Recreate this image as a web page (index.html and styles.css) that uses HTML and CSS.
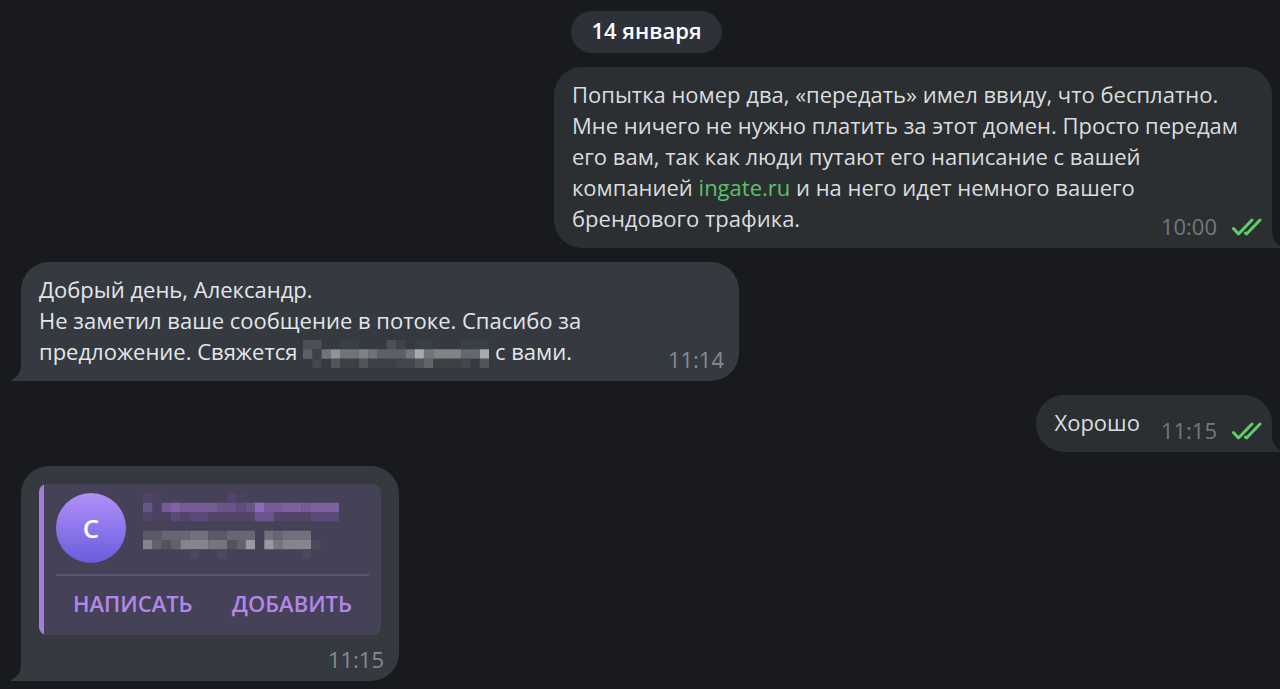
FILE: index.html
```html
<!DOCTYPE html>
<html lang="ru">
<head>
    <meta charset="UTF-8">
    <meta name="viewport" content="width=device-width, initial-scale=1.0">
    <title>Чат</title>
    <link rel="stylesheet" href="styles.css">
</head>
<body>
    <main class="chat">
        <div class="date">14 января</div>

        <div class="bubble out">
            <p class="text">Попытка номер два, «передать» имел ввиду, что бесплатно. Мне ничего не нужно платить за этот домен. Просто передам его вам, так как люди путают его написание с вашей компанией <a href="#">ingate.ru</a> и на него идет немного вашего брендового трафика.</p>
            <div class="meta">
                <time>10:00</time>
                <svg class="ticks" viewBox="0 0 30 18" aria-hidden="true"><path d="M1.5 10.5l5 5.5L20 2M13.5 15l1 1L28 2"/></svg>
            </div>
            <svg class="tail" viewBox="0 0 10 18" aria-hidden="true"><path d="M0 0C0 9 3 14 10 17V18H0z"/></svg>
        </div>

        <div class="bubble in">
            <p class="text">Добрый день, Александр.<br>Не заметил ваше сообщение в потоке. Спасибо за предложение. Свяжется <svg class="mosaic-inline" viewBox="0 0 20 3" aria-hidden="true">
                <path fill="#4c5157" d="M0 0h2v1H0zM9 0h1v1H9z"/>
                <path fill="#3d434a" d="M10 0h1v1h-1zM1 1h1v1H1z"/>
                <path fill="#393f46" d="M4 0h2v1H4zM12 0h2v1h-2zM17 0h3v1h-3z"/>
                <path fill="#5d6166" d="M0 1h1v1H0zM8 1h2v1H8zM10 1h1v1h-1z"/>
                <path fill="#707377" d="M2 1h1v1H2zM4 1h2v1H4zM7 1h1v1H7zM13 1h1v1h-1z"/>
                <path fill="#929496" d="M3 1h1v1H3z"/>
                <path fill="#808386" d="M6 1h1v1H6zM14 1h3v1h-3z"/>
                <path fill="#74777e" d="M11 1h1v1h-1z"/>
                <path fill="#a9aaac" d="M12 1h1v1h-1zM19 1h1v1h-1z"/>
                <path fill="#65696e" d="M17 1h2v1h-2z"/>
                <path fill="#42474d" d="M1 2h1v1H1zM10 2h2v1h-2zM17 2h1v1h-1z"/>
                <path fill="#50555a" d="M3 2h1v1H3zM6 2h1v1H6zM12 2h1v1h-1zM19 2h1v1h-1z"/>
                <path fill="#62666b" d="M13 2h1v1h-1z"/>
                <path fill="#3b4147" d="M4 2h2v1H4zM7 2h3v1H7zM14 2h3v1h-3z"/>
            </svg> с вами.</p>
            <div class="meta"><time>11:14</time></div>
            <svg class="tail" viewBox="0 0 10 18" aria-hidden="true"><path d="M0 0C0 9 3 14 10 17V18H0z"/></svg>
        </div>

        <div class="bubble out short">
            <p class="text">Хорошо</p>
            <div class="meta">
                <time>11:15</time>
                <svg class="ticks" viewBox="0 0 30 18" aria-hidden="true"><path d="M1.5 10.5l5 5.5L20 2M13.5 15l1 1L28 2"/></svg>
            </div>
            <svg class="tail" viewBox="0 0 10 18" aria-hidden="true"><path d="M0 0C0 9 3 14 10 17V18H0z"/></svg>
        </div>

        <div class="bubble in contact">
            <div class="card">
                <div class="person">
                    <div class="avatar">С</div>
                    <svg class="mosaic" viewBox="0 0 21 7" aria-hidden="true">
                        <path fill="#51446b" d="M0 0h1v1H0zM9 0h1v1H9z"/>
                        <path fill="#4a425f" d="M1 0h1v1H1zM10 0h1v1h-1zM1 1h1v1H1z"/>
                        <path fill="#68558a" d="M0 1h1v1H0zM8 1h2v1H8zM11 1h1v1h-1z"/>
                        <path fill="#5d4e7a" d="M10 1h1v1h-1z"/>
                        <path fill="#755b98" d="M2 1h1v1H2zM4 1h4v1H4zM13 1h2v1h-2zM17 1h1v1h-1z"/>
                        <path fill="#8460a6" d="M3 1h1v1H3z"/>
                        <path fill="#8d6bbe" d="M12 1h1v1h-1z"/>
                        <path fill="#7c62a0" d="M15 1h2v1h-2zM18 1h3v1h-3z"/>
                        <path fill="#514569" d="M0 2h1v1H0zM4 2h1v1H4zM7 2h5v1H7zM14 2h4v1h-4z"/>
                        <path fill="#4a435f" d="M1 2h2v1H1z"/>
                        <path fill="#5b4a78" d="M3 2h1v1H3zM5 2h2v1H5zM18 2h3v1h-3z"/>
                        <path fill="#6b5590" d="M12 2h2v1h-2z"/>
                        <path fill="#5b5867" d="M0 4h2v1H0zM7 4h2v1H7z"/>
                        <path fill="#686671" d="M2 4h3v1H2zM9 4h3v1H9zM14 4h1v1h-1z"/>
                        <path fill="#72707a" d="M5 4h2v1H5zM13 4h1v1h-1zM15 4h2v1h-2zM17 4h1v1h-1z"/>
                        <path fill="#85838b" d="M0 5h1v1H0zM4 5h3v1H4zM15 5h3v1h-3z"/>
                        <path fill="#64616d" d="M1 5h1v1H1zM3 5h1v1H3zM10 5h1v1h-1z"/>
                        <path fill="#55525f" d="M2 5h1v1H2zM9 5h1v1H9z"/>
                        <path fill="#77757f" d="M7 5h2v1H7zM14 5h1v1h-1z"/>
                        <path fill="#9a98a0" d="M11 5h1v1h-1zM13 5h1v1h-1z"/>
                        <path fill="#4c495d" d="M5 6h1v1H5zM8 6h1v1H8zM17 6h1v1h-1zM18 5h1v1h-1z"/>
                    </svg>
                </div>
                <div class="actions">
                    <button type="button">НАПИСАТЬ</button>
                    <button type="button">ДОБАВИТЬ</button>
                </div>
            </div>
            <div class="meta"><time>11:15</time></div>
            <svg class="tail" viewBox="0 0 10 18" aria-hidden="true"><path d="M0 0C0 9 3 14 10 17V18H0z"/></svg>
        </div>
    </main>
</body>
</html>
```
FILE: styles.css
```css
body {
    margin: 0;
    background-color: #191a1d;
    color: #e3e6e8;
    font-family: "Open Sans", "Noto Sans", sans-serif;
    font-size: 22px;
    line-height: 31px;
    overflow-x: hidden;
}
.chat {
    display: flex;
    flex-direction: column;
    gap: 14px;
    padding: 11px 8px 8px 21px;
}
.date {
    align-self: center;
    padding: 4px 20px 7px;
    border-radius: 21px;
    background-color: #2d3238;
    color: #fff;
    font-weight: 600;
}
.bubble {
    position: relative;
    display: grid;
    box-sizing: border-box;
    max-width: 718px;
    padding: 12px 18px 14px;
    border-radius: 28px;
}
.out {
    align-self: flex-end;
    border-bottom-right-radius: 0;
    background-color: #2b2f32;
    color: #dadddf;
}
.in {
    align-self: flex-start;
    border-bottom-left-radius: 0;
    background-color: #343a40;
}
.text {
    grid-area: 1 / 1;
    margin: 0;
}
.text a {
    color: #5cc265;
    text-decoration: none;
}
/* the time shares the grid cell with the last line of text */
.meta {
    grid-area: 1 / 1;
    align-self: end;
    justify-self: end;
    display: flex;
    align-items: center;
    gap: 15px;
    margin: 0 -3px -8px 0;
    color: #73787c;
}
.in .meta {
    color: #868b90;
}
.out .meta {
    margin-right: -8px;
}
.short {
    display: flex;
    gap: 21px;
}
.ticks {
    width: 30px;
    height: 18px;
    fill: none;
    stroke: #62cd68;
    stroke-width: 3;
    stroke-linecap: round;
    stroke-linejoin: round;
}
.tail {
    position: absolute;
    bottom: 0;
    width: 10px;
    height: 18px;
}
.out .tail {
    left: 100%;
    fill: #2b2f32;
}
.in .tail {
    right: 100%;
    fill: #343a40;
    transform: scaleX(-1);
}
.mosaic-inline {
    width: 186px;
    height: 28px;
    margin: -4px 0;
    vertical-align: -4px;
}
.contact {
    display: block;
    width: 378px;
    padding-top: 18px;
}
.contact .meta {
    justify-content: flex-end;
    margin-top: 9px;
}
.card {
    padding: 9px 12px 8px 17px;
    border-radius: 8px;
    background: linear-gradient(to right, #a67ddc 5px, #454257 5px);
}
.person {
    display: flex;
    gap: 17px;
    padding-bottom: 11px;
    border-bottom: 2px solid #59536e;
}
.avatar {
    display: flex;
    align-items: center;
    justify-content: center;
    width: 70px;
    height: 70px;
    border-radius: 50%;
    background: linear-gradient(#b191f8, #6a5cdd);
    color: #fff;
    font-size: 26px;
    font-weight: 600;
}
.mosaic {
    width: 196px;
    height: 66px;
}
.actions {
    display: flex;
    justify-content: space-between;
    padding: 0 17px;
}
button {
    padding: 12px 0 8px;
    border: none;
    background: none;
    color: #b287ec;
    font: inherit;
    font-weight: 600;
    cursor: pointer;
}
```
